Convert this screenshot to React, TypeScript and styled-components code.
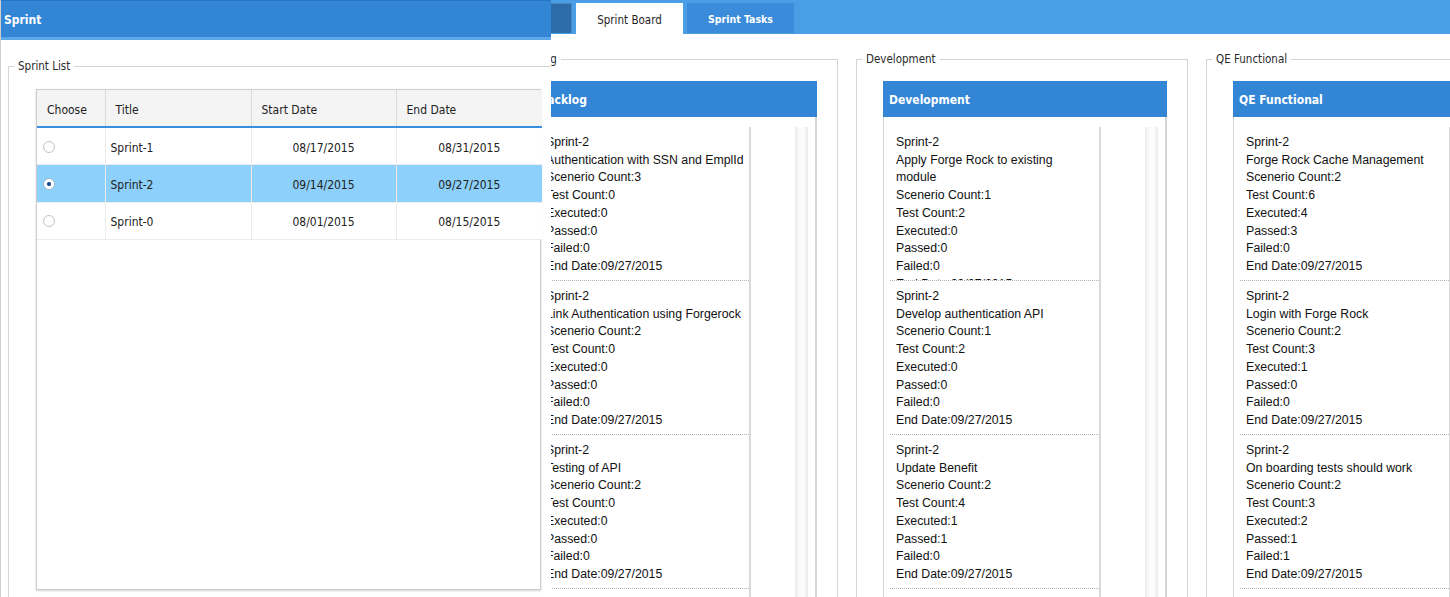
import * as React from "react";
import { createGlobalStyle, styled } from "styled-components";

type Task = {
    sprint: string;
    title: string;
    scenarios: number;
    tests: number;
    executed: number;
    passed: number;
    failed: number;
    endDate: string;
};

type Sprint = {
    title: string;
    start: string;
    end: string;
};

const headFont = `"DejaVu Sans Condensed", "DejaVu Sans", sans-serif`;
const cardFont = `"Liberation Sans", Arial, sans-serif`;

const sprints: Sprint[] = [
    { title: "Sprint-1", start: "08/17/2015", end: "08/31/2015" },
    { title: "Sprint-2", start: "09/14/2015", end: "09/27/2015" },
    { title: "Sprint-0", start: "08/01/2015", end: "08/15/2015" },
];

const task = (title: string, scenarios: number, tests: number, executed: number, passed: number, failed: number): Task => ({
    sprint: "Sprint-2",
    title,
    scenarios,
    tests,
    executed,
    passed,
    failed,
    endDate: "09/27/2015",
});

const lanes: { name: string; tasks: Task[] }[] = [
    {
        name: "Backlog",
        tasks: [
            task("Authentication with SSN and EmplId", 3, 0, 0, 0, 0),
            task("Link Authentication using Forgerock", 2, 0, 0, 0, 0),
            task("Testing of API", 2, 0, 0, 0, 0),
        ],
    },
    {
        name: "Development",
        tasks: [
            task("Apply Forge Rock to existing module", 1, 2, 0, 0, 0),
            task("Develop authentication API", 1, 2, 0, 0, 0),
            task("Update Benefit", 2, 4, 1, 1, 0),
        ],
    },
    {
        name: "QE Functional",
        tasks: [
            task("Forge Rock Cache Management", 2, 6, 4, 3, 0),
            task("Login with Forge Rock", 2, 3, 1, 0, 0),
            task("On boarding tests should work", 2, 3, 2, 1, 1),
        ],
    },
];

const GlobalStyle = createGlobalStyle`
    html, body {
        margin: 0;
        padding: 0;
        background: #ffffff;
        overflow: hidden;
    }
    body {
        font-family: ${headFont};
        color: #222;
    }
`;

const Page = styled.div`
    position: relative;
    width: 1450px;
    height: 597px;
    overflow: hidden;
    background: #ffffff;
`;

const TabBar = styled.div`
    display: flex;
    align-items: flex-end;
    gap: 4px;
    height: 34px;
    padding-left: 470px;
    background: #4a9ee6;
`;

const Tab = styled.div<{ $variant: "active" | "plain" | "dark" }>`
    display: flex;
    align-items: center;
    justify-content: center;
    box-sizing: border-box;
    width: ${(p) => (p.$variant === "dark" ? "102px" : "107px")};
    height: ${(p) => (p.$variant === "active" ? "31px" : "30px")};
    margin-bottom: ${(p) => (p.$variant === "active" ? "0" : "1px")};
    padding-top: 1px;
    font-family: ${headFont};
    font-size: ${(p) => (p.$variant === "active" ? "11.5px" : "10.5px")};
    font-weight: ${(p) => (p.$variant === "active" ? "normal" : "bold")};
    color: ${(p) => (p.$variant === "active" ? "#1e1e1e" : "#ffffff")};
    background: ${(p) => (p.$variant === "active" ? "#ffffff" : p.$variant === "dark" ? "#2b6ca9" : "#3a8bd9")};
    border: 1px solid ${(p) => (p.$variant === "dark" ? "#4a86c0" : "transparent")};
    border-bottom: none;
`;

const Board = styled.div`
    display: flex;
    gap: 18px;
    padding: 18px 0 0 506px;
`;

const LaneSet = styled.fieldset`
    flex: none;
    box-sizing: border-box;
    width: 332px;
    height: 560px;
    min-width: 0;
    margin: 0;
    padding: 15px 20px 0 26px;
    border: 1px solid #d4d4d4;
`;

const Legend = styled.legend<{ $offset: number }>`
    margin-left: ${(p) => p.$offset}px;
    padding: 0 4px;
    font-family: ${headFont};
    font-size: 11.5px;
    line-height: 14px;
    color: #2a2a2a;
`;

const LaneBox = styled.div`
    display: flex;
    flex-direction: column;
    width: 284px;
    height: 540px;
    box-sizing: border-box;
    border-left: 1px solid #d6d6d6;
    border-right: 2px solid #d6d6d6;
`;

const LaneHeader = styled.div`
    flex: none;
    height: 36px;
    display: flex;
    align-items: center;
    padding: 1px 0 0 6px;
    box-sizing: border-box;
    margin-left: -1px;
    margin-right: -2px;
    background: #3386d6;
    color: #ffffff;
    font-family: ${headFont};
    font-size: 12px;
    font-weight: bold;
`;

const LaneBody = styled.div`
    display: flex;
    flex: 1;
    padding-top: 10px;
`;

const CardList = styled.div`
    flex: none;
    width: 217px;
    box-sizing: border-box;
    border-right: 2px solid #d9d9d9;
`;

const Card = styled.div`
    box-sizing: border-box;
    height: 154px;
    margin-left: 6px;
    padding: 7px 4px 4px 6px;
    border-bottom: 1px dotted #b4b4b4;
    overflow: hidden;
    font-family: ${cardFont};
    font-size: 12.3px;
    line-height: 17.7px;
    color: #111;
`;

const ScrollTrack = styled.div`
    flex: none;
    width: 13px;
    margin-left: 44px;
    background: linear-gradient(to right, #ececec, #fbfbfb 35%, #fdfdfd 65%, #eaeaea);
`;

const SprintWindow = styled.div`
    position: absolute;
    top: 0;
    left: 0;
    z-index: 2;
    width: 551px;
    height: 597px;
    box-sizing: border-box;
    overflow: hidden;
    background: #ffffff;
    border-left: 1px solid #cfcfcf;
`;

const WindowHeader = styled.div`
    height: 36px;
    display: flex;
    align-items: center;
    padding: 2px 0 0 3px;
    box-sizing: border-box;
    background: #3386d6;
    border-top: 1px solid #2a74bd;
    border-bottom: 3px solid #5ea7e9;
    color: #ffffff;
    font-family: ${headFont};
    font-size: 12px;
    font-weight: bold;
    height: 40px;
`;

const ListSet = styled.fieldset`
    box-sizing: border-box;
    width: 580px;
    height: 600px;
    min-width: 0;
    margin: 19px 0 0 7px;
    padding: 16px 0 0 27px;
    border: 1px solid #d4d4d4;
`;

const Grid = styled.div`
    width: 505px;
    height: 501px;
    box-sizing: border-box;
    border: 1px solid #cdcdcd;
    box-shadow: 0 1px 2px rgba(0, 0, 0, 0.18);
    background: #ffffff;
`;

const Table = styled.table`
    width: 100%;
    border-collapse: collapse;
    table-layout: fixed;
    font-family: ${headFont};
    font-size: 12px;
    color: #222;
`;

const HeadCell = styled.th<{ $width: number }>`
    box-sizing: border-box;
    width: ${(p) => p.$width}px;
    height: 37px;
    padding: 3px 0 0 10px;
    text-align: left;
    font-weight: normal;
    font-size: 12px;
    background: #f4f4f4;
    border-right: 1px solid #dcdcdc;
    border-bottom: 2px solid #3a8ee0;
    &:last-child {
        border-right: none;
    }
`;

const Row = styled.tr<{ $selected: boolean }>`
    height: 37.5px;
    background: ${(p) => (p.$selected ? "#8dd0fb" : "#ffffff")};
`;

const Cell = styled.td<{ $align?: "left" | "center" }>`
    padding: 3px 0 0 ${(p) => (p.$align === "center" ? "0" : "5px")};
    text-align: ${(p) => p.$align ?? "left"};
    border-right: 1px solid #ececec;
    border-bottom: 1px solid #ececec;
    &:last-child {
        border-right: none;
    }
`;

const Radio = styled.span<{ $checked: boolean }>`
    display: inline-block;
    box-sizing: border-box;
    width: 12px;
    height: 12px;
    margin: -3px 0 0 1px;
    vertical-align: middle;
    border-radius: 50%;
    border: 1px solid ${(p) => (p.$checked ? "#9bb8d4" : "#c4c4c4")};
    background: ${(p) =>
        p.$checked ? "radial-gradient(circle, #1b4f8e 0 1.8px, #ffffff 2.3px)" : "#ffffff"};
`;

const TaskCard = ({ item }: { item: Task }) => (
    <Card>
        <div>{item.sprint}</div>
        <div>{item.title}</div>
        <div>Scenerio Count:{item.scenarios}</div>
        <div>Test Count:{item.tests}</div>
        <div>Executed:{item.executed}</div>
        <div>Passed:{item.passed}</div>
        <div>Failed:{item.failed}</div>
        <div>End Date:{item.endDate}</div>
    </Card>
);

const SprintList = () => {
    const [selected, setSelected] = React.useState(1);
    return (
        <SprintWindow>
            <WindowHeader>Sprint</WindowHeader>
            <ListSet>
                <Legend $offset={-22}>Sprint List</Legend>
                <Grid>
                    <Table>
                        <thead>
                            <tr>
                                <HeadCell $width={68}>Choose</HeadCell>
                                <HeadCell $width={146}>Title</HeadCell>
                                <HeadCell $width={145}>Start Date</HeadCell>
                                <HeadCell $width={146}>End Date</HeadCell>
                            </tr>
                        </thead>
                        <tbody>
                            {sprints.map((s, i) => (
                                <Row key={s.title} $selected={i === selected} onClick={() => setSelected(i)}>
                                    <Cell>
                                        <Radio $checked={i === selected} />
                                    </Cell>
                                    <Cell>{s.title}</Cell>
                                    <Cell $align="center">{s.start}</Cell>
                                    <Cell $align="center">{s.end}</Cell>
                                </Row>
                            ))}
                        </tbody>
                    </Table>
                </Grid>
            </ListSet>
        </SprintWindow>
    );
};

const App = () => (
    <Page>
        <GlobalStyle />
        <TabBar>
            <Tab $variant="dark">Sprint</Tab>
            <Tab $variant="active">Sprint Board</Tab>
            <Tab $variant="plain">Sprint Tasks</Tab>
        </TabBar>
        <Board>
            {lanes.map((lane) => (
                <LaneSet key={lane.name}>
                    <Legend $offset={-21}>{lane.name}</Legend>
                    <LaneBox>
                        <LaneHeader>{lane.name}</LaneHeader>
                        <LaneBody>
                            <CardList>
                                {lane.tasks.map((t) => (
                                    <TaskCard key={t.title} item={t} />
                                ))}
                            </CardList>
                            <ScrollTrack />
                        </LaneBody>
                    </LaneBox>
                </LaneSet>
            ))}
        </Board>
        <SprintList />
    </Page>
);

export default App;
